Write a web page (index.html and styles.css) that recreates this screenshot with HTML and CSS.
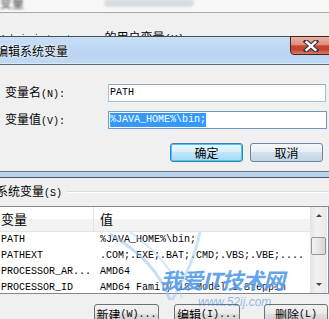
FILE: index.html
```html
<!DOCTYPE html>
<html>
<head>
<meta charset="utf-8">
<link rel="stylesheet" href="styles.css">
</head>
<body>
<div class="bg-top"><span class="blur cj">变量</span><span class="blur blob"></span></div>
<div class="bg-mid"><span class="dots">Administrator</span> <span class="cj">的用户变量</span>(U)</div>

<div class="dlg">
  <div class="titlebar">
    <span class="title cj">编辑系统变量</span>
    <div class="close">
      <svg width="18" height="12" viewBox="0 0 18 12">
        <path d="M4 1.5 L14 10.5 M14 1.5 L4 10.5" stroke="#3a3a4a" stroke-width="4.6" stroke-linecap="square"/>
        <path d="M4.6 2.2 L13.4 9.8 M13.4 2.2 L4.6 9.8" stroke="#ffffff" stroke-width="2.4" stroke-linecap="square"/>
      </svg>
    </div>
  </div>
  <div class="dlg-body">
    <div class="field">
      <label class="lbl"><span class="cj">变量名</span>(N):</label>
      <div class="input">PATH</div>
    </div>
    <div class="field">
      <label class="lbl"><span class="cj">变量值</span>(V):</label>
      <div class="input focus"><span class="sel">%JAVA_HOME%\bin;</span></div>
    </div>
    <div class="btns">
      <div class="btn default cj">确定</div>
      <div class="btn blue cj">取消</div>
    </div>
  </div>
  <div class="frame"></div>
</div>

<div class="lower">
  <div class="group"><span class="glabel"><span class="cj">系统变量</span>(S)</span><span class="gline"></span></div>
  <div class="list">
    <div class="list-main">
      <div class="lhead">
        <div class="c1 cj hd">变量</div>
        <div class="c2 cj hd">值</div>
      </div>
      <div class="row"><div class="c1">PATH</div><div class="c2">%JAVA_HOME%\bin;</div></div>
      <div class="row"><div class="c1">PATHEXT</div><div class="c2">.COM;.EXE;.BAT;.CMD;.VBS;.VBE;....</div></div>
      <div class="row"><div class="c1">PROCESSOR_AR...</div><div class="c2">AMD64</div></div>
      <div class="row"><div class="c1">PROCESSOR_ID</div><div class="c2">AMD64 Family 18 Model 1 Steppin</div></div>
    </div>
    <div class="sbar">
      <div class="sbtn"><span class="tri up"></span></div>
      <div class="strack"><div class="thumb"></div></div>
      <div class="sbtn"><span class="tri down"></span></div>
    </div>
  </div>
  <div class="lbtns">
    <div class="btn n1"><span class="cj">新建</span>(W)...</div>
    <div class="btn n2"><span class="cj">编辑</span>(I)...</div>
    <div class="btn n3"><span class="cj">删除</span>(L)</div>
  </div>
</div>

<div class="wm">
  <svg class="wing" width="120" height="70" viewBox="0 0 120 70">
    <path d="M10 2 C40 20 60 40 70 68" stroke="#9cc8f0" stroke-width="3" fill="none" opacity="0.6"/>
    <path d="M30 0 C55 18 75 38 82 66" stroke="#b8d8f5" stroke-width="2" fill="none" opacity="0.6"/>
    <path d="M100 0 C95 25 85 45 72 68" stroke="#9cc8f0" stroke-width="3" fill="none" opacity="0.5"/>
  </svg>
  <div class="wm-big cj">我爱IT技术网</div>
  <div class="wm-small">www.52ij.com</div>
</div>
</body>
</html>
```
FILE: styles.css
```css
body {
  margin: 0;
  width: 329px;
  height: 319px;
  overflow: hidden;
  position: relative;
  background: #f0f0f0;
  color: #000;
  font-family: "Liberation Mono", "Noto Sans CJK SC", monospace;
  font-size: 10px;
}
.cj {
  font-family: "Noto Sans CJK SC", sans-serif;
  font-size: 12px;
}

/* background window */
.bg-top {
  height: 12px;
  background: #f8f8f8;
  border-bottom: 1px solid #a8a8a8;
  display: flex;
  align-items: flex-start;
  overflow: hidden;
}
.blur { filter: blur(1.2px); color: #444; line-height: 8px; margin-top: -1px; }
.blob {
  display: block;
  width: 90px;
  height: 8px;
  margin-left: 80px;
  background: #d8dde4;
  border-radius: 4px;
}
.bg-mid {
  height: 23px;
  box-sizing: border-box;
  padding: 17px 0 0 0;
  overflow: hidden;
  line-height: 14px;
  white-space: nowrap;
  font-size: 11px;
}
.dots { filter: blur(0.6px); color: #555; margin-right: 12px; }

/* dialog */
.dlg { position: relative; }
.titlebar {
  position: relative;
  height: 27px;
  border-top: 1px solid #3e5266;
  border-bottom: 1px solid #5c6c7c;
  background: linear-gradient(to bottom, #c8def4 0%, #bed8f4 40%, #b9d5f4 70%, #c2dbf4 100%);
  box-shadow: inset 0 -1px 0 #dbe8f6;
}
.title {
  display: block;
  margin-left: -4px;
  line-height: 27px;
  font-size: 12px;
  text-shadow: 0 0 4px #ffffff, 0 0 2px #ffffff;
}
.close {
  position: absolute;
  left: 290px;
  top: -1px;
  width: 44px;
  height: 19px;
  border: 1px solid #4a2018;
  border-radius: 0 0 0 4px;
  background: linear-gradient(to bottom, #e9b2a6 0%, #de8f7f 45%, #c8432c 52%, #c4442e 75%, #d77e67 100%);
  display: flex;
  align-items: center;
  padding-left: 11px;
  box-sizing: border-box;
}
.dlg-body {
  height: 107px;
  box-sizing: border-box;
  padding-top: 19px;
  border-bottom: 1px solid #6a7a8a;
  display: flex;
  flex-direction: column;
}
.field {
  display: flex;
  align-items: center;
  height: 18px;
  margin-bottom: 9px;
}
.lbl {
  width: 103px;
  padding-left: 5px;
  line-height: 18px;
  white-space: nowrap;
}
.input {
  width: 218px;
  height: 18px;
  box-sizing: border-box;
  border: 1px solid #abc0d6;
  border-top-color: #95aac2;
  background: #fff;
  padding-left: 1px;
  line-height: 16px;
  font-size: 10px;
  white-space: nowrap;
}
.input.focus {
  width: 219px;
  border-color: #6e9ac5;
  padding-top: 1px;
  line-height: 14px;
}
.sel {
  display: inline-block;
  background: #3399ff;
  color: #fff;
  height: 14px;
  line-height: 14px;
}
.btns {
  display: flex;
  gap: 7px;
  margin-top: 5px;
  padding-left: 170px;
}
.btn {
  height: 19px;
  box-sizing: border-box;
  display: flex;
  align-items: center;
  justify-content: center;
  border: 1px solid #707070;
  border-radius: 3px;
  background: linear-gradient(to bottom, #f2f2f2 0%, #ebebeb 49%, #dddddd 50%, #cfcfcf 100%);
  line-height: 17px;
  white-space: nowrap;
}
.btns .btn { width: 73px; }
.btn.default {
  border-color: #3c7fb1;
  background: linear-gradient(to bottom, #eaf6fd 0%, #d9f0fc 49%, #bee6fd 50%, #a7d9f5 100%);
  box-shadow: inset 0 0 0 1px #48c7f3;
}
.btn.blue {
  border-color: #6d87a3;
  background: linear-gradient(to bottom, #f4f7fa 0%, #e8eef4 49%, #d4e1ec 50%, #c2d5e5 100%);
}
.frame {
  height: 5px;
  background: #b9d2ec;
  border-bottom: 1px solid #46586a;
}

/* lower area */
.lower {
  padding-top: 8px;
}
.group {
  display: flex;
  align-items: center;
  height: 12px;
  margin-left: -4px;
}
.glabel { line-height: 12px; white-space: nowrap; }
.gline {
  flex: 1;
  margin-left: 5px;
  height: 1px;
  background: #d5dfe5;
  border-bottom: 1px solid #ffffff;
}
.list {
  margin-top: 8px;
  margin-left: -1px;
  width: 330px;
  height: 88px;
  box-sizing: border-box;
  border: 1px solid #828790;
  background: #fff;
  display: flex;
  overflow: hidden;
}
.list-main { flex: 1; overflow: hidden; }
.lhead {
  display: flex;
  height: 25px;
  box-sizing: border-box;
  border-bottom: 1px solid #e5e5e5;
  background: linear-gradient(to bottom, #ffffff 0%, #ffffff 50%, #f3f4f6 51%, #f1f2f4 100%);
}
.hd { line-height: 24px; font-size: 13px; }
.c1 { width: 92px; padding-left: 2px; box-sizing: border-box; white-space: nowrap; flex: none; }
.c2 { padding-left: 7px; white-space: nowrap; }
.lhead .c1 { border-right: 1px solid #e0e2e6; width: 94px; padding-left: 1px; }
.lhead .c2 { padding-left: 6px; }
.row {
  display: flex;
  height: 16px;
  line-height: 16px;
}
.row .c1 { width: 94px; padding-left: 1px; }
.row .c2 { padding-left: 6px; }
.sbar {
  width: 17px;
  display: flex;
  flex-direction: column;
  background: linear-gradient(to right, #e3e3e3, #f2f2f2 40%, #e8e8e8);
  margin-right: 1px;
}
.sbtn {
  height: 17px;
  display: flex;
  align-items: center;
  justify-content: center;
  flex: none;
}
.tri { width: 0; height: 0; border-left: 3px solid transparent; border-right: 3px solid transparent; }
.tri.up { border-bottom: 3px solid #444; }
.tri.down { border-top: 3px solid #444; }
.strack { flex: 1; padding-top: 13px; }
.thumb {
  height: 16px;
  margin: 0 1px;
  border: 1px solid #979797;
  border-radius: 2px;
  background: linear-gradient(to right, #f3f3f3, #e6e6e6 50%, #d5d5d5);
}
.lbtns {
  display: flex;
  margin-top: 10px;
  padding-left: 94px;
}
.lbtns .btn { height: 20px; }
.n1 { width: 65px; }
.n2 { width: 66px; margin-left: 15px; }
.n3 { width: 64px; margin-left: 24px; }

/* watermark overlay */
.wm {
  position: absolute;
  left: 100px;
  top: 232px;
  width: 220px;
  height: 80px;
  pointer-events: none;
}
.wing { position: absolute; left: 0; top: 0; }
.wm-big {
  position: absolute;
  left: 60px;
  top: 31px;
  font-size: 22px;
  font-weight: bold;
  font-style: italic;
  color: rgba(40, 130, 225, 0.72);
  white-space: nowrap;
  letter-spacing: -1px;
  text-shadow: 0 0 2px rgba(255,255,255,0.8);
}
.wm-small {
  position: absolute;
  left: 98px;
  top: 63px;
  font-family: "Liberation Sans", sans-serif;
  font-size: 12px;
  font-style: italic;
  color: rgba(60, 140, 225, 0.55);
}
```
